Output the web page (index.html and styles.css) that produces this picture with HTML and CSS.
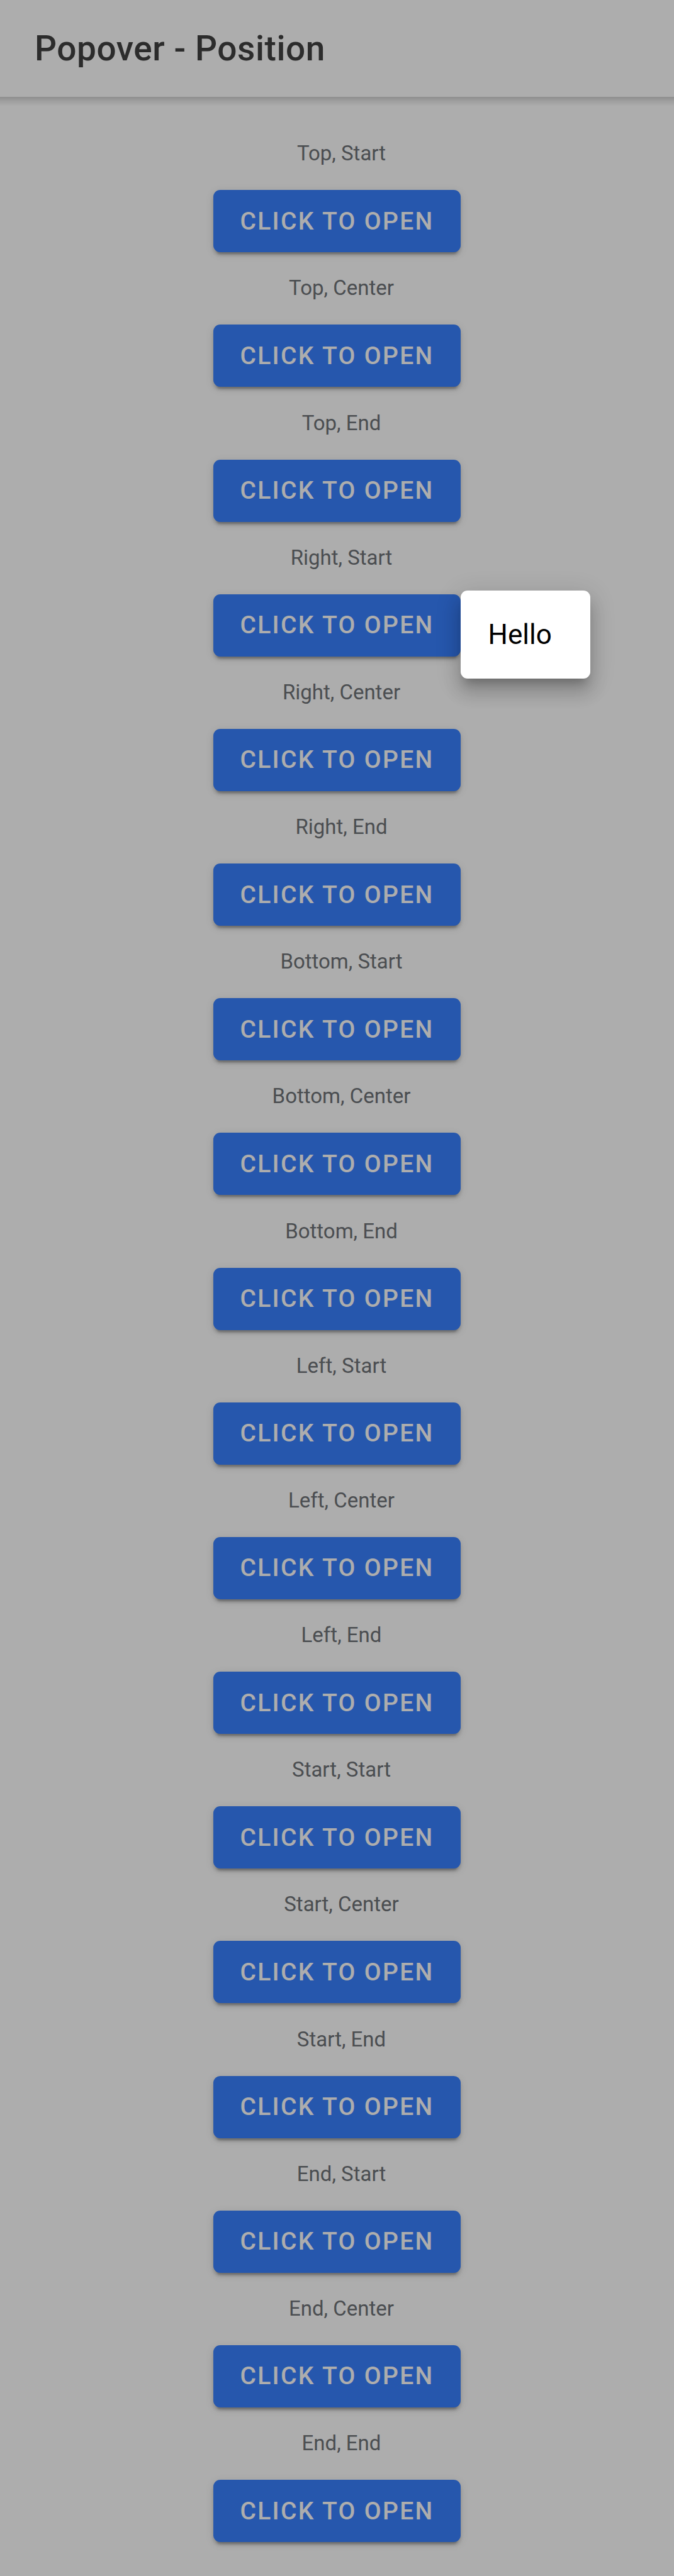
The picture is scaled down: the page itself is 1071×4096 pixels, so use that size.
FILE: index.html
```
<!DOCTYPE html>
<html lang="en">
<head>
  <meta charset="utf-8">
  <meta name="viewport" content="width=device-width, initial-scale=1">
  <title>Popover - Position</title>
  <link rel="stylesheet" href="styles.css">
</head>
<body>
  <header class="header">
    <h1 class="title">Popover - Position</h1>
  </header>
  <main class="grid">
    <section class="cell"><p class="label" id="top-start">Top, Start</p><div class="anchor"><button class="button" type="button" aria-describedby="top-start">Click to Open</button></div></section>
    <section class="cell"><p class="label" id="top-center">Top, Center</p><div class="anchor"><button class="button" type="button" aria-describedby="top-center">Click to Open</button></div></section>
    <section class="cell"><p class="label" id="top-end">Top, End</p><div class="anchor"><button class="button" type="button" aria-describedby="top-end">Click to Open</button></div></section>
    <section class="cell"><p class="label" id="right-start">Right, Start</p><div class="anchor"><button class="button" type="button" aria-describedby="right-start" aria-expanded="true">Click to Open</button><div class="popover" role="dialog" aria-label="Hello">Hello</div></div></section>
    <section class="cell"><p class="label" id="right-center">Right, Center</p><div class="anchor"><button class="button" type="button" aria-describedby="right-center">Click to Open</button></div></section>
    <section class="cell"><p class="label" id="right-end">Right, End</p><div class="anchor"><button class="button" type="button" aria-describedby="right-end">Click to Open</button></div></section>
    <section class="cell"><p class="label" id="bottom-start">Bottom, Start</p><div class="anchor"><button class="button" type="button" aria-describedby="bottom-start">Click to Open</button></div></section>
    <section class="cell"><p class="label" id="bottom-center">Bottom, Center</p><div class="anchor"><button class="button" type="button" aria-describedby="bottom-center">Click to Open</button></div></section>
    <section class="cell"><p class="label" id="bottom-end">Bottom, End</p><div class="anchor"><button class="button" type="button" aria-describedby="bottom-end">Click to Open</button></div></section>
    <section class="cell"><p class="label" id="left-start">Left, Start</p><div class="anchor"><button class="button" type="button" aria-describedby="left-start">Click to Open</button></div></section>
    <section class="cell"><p class="label" id="left-center">Left, Center</p><div class="anchor"><button class="button" type="button" aria-describedby="left-center">Click to Open</button></div></section>
    <section class="cell"><p class="label" id="left-end">Left, End</p><div class="anchor"><button class="button" type="button" aria-describedby="left-end">Click to Open</button></div></section>
    <section class="cell"><p class="label" id="start-start">Start, Start</p><div class="anchor"><button class="button" type="button" aria-describedby="start-start">Click to Open</button></div></section>
    <section class="cell"><p class="label" id="start-center">Start, Center</p><div class="anchor"><button class="button" type="button" aria-describedby="start-center">Click to Open</button></div></section>
    <section class="cell"><p class="label" id="start-end">Start, End</p><div class="anchor"><button class="button" type="button" aria-describedby="start-end">Click to Open</button></div></section>
    <section class="cell"><p class="label" id="end-start">End, Start</p><div class="anchor"><button class="button" type="button" aria-describedby="end-start">Click to Open</button></div></section>
    <section class="cell"><p class="label" id="end-center">End, Center</p><div class="anchor"><button class="button" type="button" aria-describedby="end-center">Click to Open</button></div></section>
    <section class="cell"><p class="label" id="end-end">End, End</p><div class="anchor"><button class="button" type="button" aria-describedby="end-end">Click to Open</button></div></section>
  </main>
  <div class="backdrop"></div>
</body>
</html>
```
FILE: styles.css
```
* {
  box-sizing: border-box;
}

body {
  position: relative;
  display: flex;
  flex-direction: column;
  min-height: 100vh;
  margin: 0;
  background: #fff;
  font-family: Roboto, "Liberation Sans", sans-serif;
}

.header {
  position: relative;
  display: flex;
  align-items: center;
  min-height: 154px;
  padding: 0 55px;
}

/* Soft edge under the toolbar */
.header::after {
  content: "";
  position: absolute;
  top: 100%;
  left: 0;
  right: 0;
  height: 14px;
  background: linear-gradient(rgba(0, 0, 0, 0.18), rgba(0, 0, 0, 0.08) 50%, rgba(0, 0, 0, 0.01));
}

.title {
  margin: 0;
  color: #424242;
  font-size: 55px;
  font-weight: 500;
  letter-spacing: 0.01em;
  line-height: 64px;
}

.grid {
  flex: 1;
  display: grid;
  grid-auto-rows: 1fr;
  padding: 33px 0 54px;
}

.cell {
  display: flex;
  flex-direction: column;
  align-items: center;
  justify-content: flex-end;
  gap: 38px;
}

.label {
  margin: 0;
  padding-left: 14px;
  color: #6f7378;
  font-size: 33px;
  line-height: 40px;
}

.anchor {
  position: relative;
}

.button {
  display: block;
  min-height: 99px;
  padding: 0 42px;
  border: 0;
  border-radius: 11px;
  background: #3880ff;
  box-shadow: 0 8px 3px -5px rgba(0, 0, 0, 0.2), 0 5px 5px rgba(0, 0, 0, 0.14), 0 3px 14px rgba(0, 0, 0, 0.12);
  color: #fff;
  font-family: inherit;
  font-size: 39px;
  font-weight: 500;
  letter-spacing: 0.06em;
  line-height: 40px;
  text-transform: uppercase;
  white-space: nowrap;
}

.backdrop {
  position: absolute;
  inset: 0;
  z-index: 1;
  background: rgba(0, 0, 0, 0.32);
}

.popover {
  position: absolute;
  top: -6px;
  left: 100%;
  z-index: 2;
  width: 206px;
  padding: 44px;
  border-radius: 11px;
  background: #fff;
  box-shadow: 0 14px 14px -8px rgba(0, 0, 0, 0.2), 0 22px 27px 3px rgba(0, 0, 0, 0.14), 0 8px 38px 5px rgba(0, 0, 0, 0.12);
  color: #000;
  font-size: 44px;
  line-height: 52px;
}
```
